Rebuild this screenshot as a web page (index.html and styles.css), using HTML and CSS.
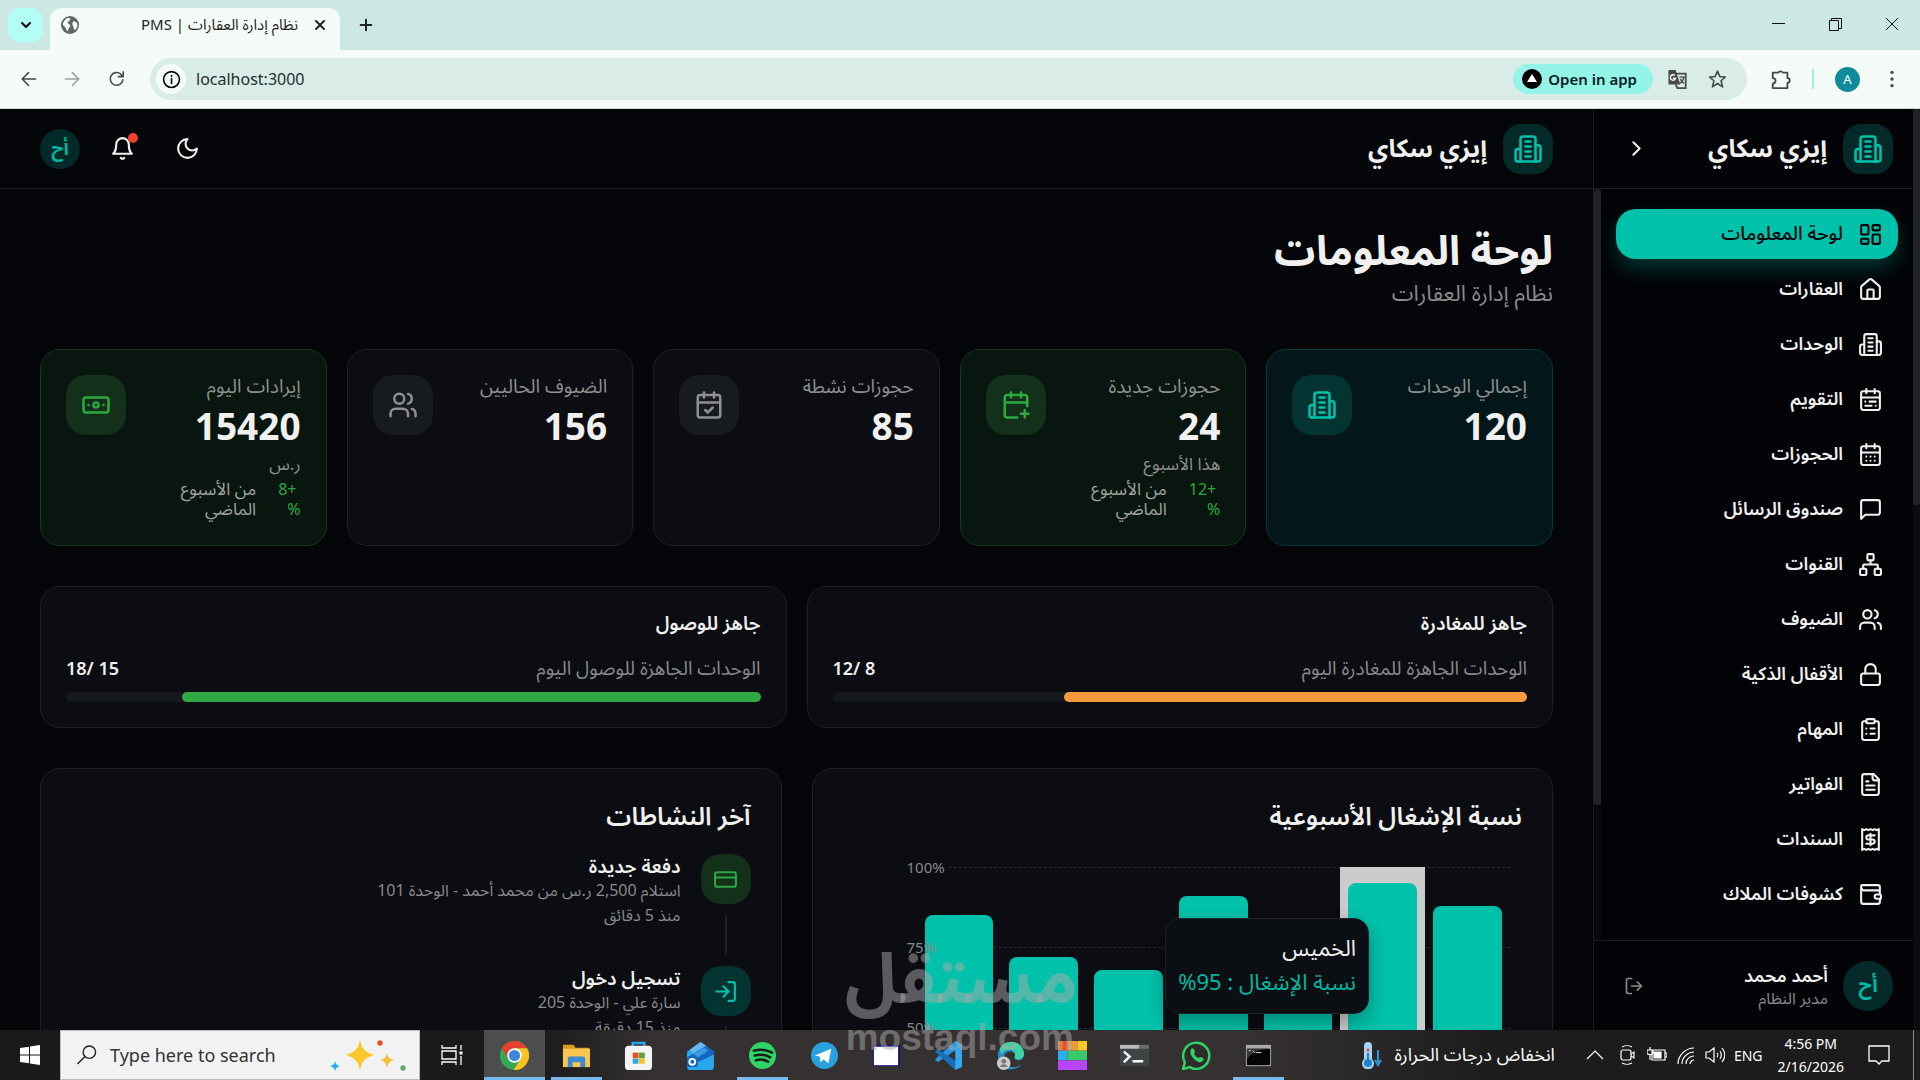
FILE: index.html
```html
<!DOCTYPE html>
<html lang="ar">
<head>
    <meta charset="UTF-8">
    <title>نظام إدارة العقارات | PMS</title>
    <link rel="stylesheet" href="styles.css">
</head>
<body>
<svg class="sprite" aria-hidden="true">
    <symbol id="building" viewBox="0 0 24 24"><path d="M6 22V4a2 2 0 0 1 2-2h8a2 2 0 0 1 2 2v18Z"/><path d="M6 12H4a2 2 0 0 0-2 2v6a2 2 0 0 0 2 2h2"/><path d="M18 9h2a2 2 0 0 1 2 2v9a2 2 0 0 1-2 2h-2"/><path d="M10 6h4M10 10h4M10 14h4M10 18h4"/></symbol>
    <symbol id="dashboard" viewBox="0 0 24 24"><rect x="3" y="3" width="7" height="9" rx="1"/><rect x="14" y="3" width="7" height="5" rx="1"/><rect x="14" y="12" width="7" height="9" rx="1"/><rect x="3" y="16" width="7" height="5" rx="1"/></symbol>
    <symbol id="home" viewBox="0 0 24 24"><path d="M15 21v-8a1 1 0 0 0-1-1h-4a1 1 0 0 0-1 1v8"/><path d="M3 10a2 2 0 0 1 .7-1.5l7-6a2 2 0 0 1 2.600 0l7 6A2 2 0 0 1 21 10v9a2 2 0 0 1-2 2H5a2 2 0 0 1-2-2z"/></symbol>
    <symbol id="calendar-range" viewBox="0 0 24 24"><rect x="3" y="4" width="18" height="18" rx="2"/><path d="M16 2v4M3 10h18M8 2v4M17 14h-6M13 18H7M7 14h.01M17 18h.01"/></symbol>
    <symbol id="calendar-days" viewBox="0 0 24 24"><rect x="3" y="4" width="18" height="18" rx="2"/><path d="M8 2v4M16 2v4M3 10h18M8 14h.01M12 14h.01M16 14h.01M8 18h.01M12 18h.01M16 18h.01"/></symbol>
    <symbol id="message" viewBox="0 0 24 24"><path d="M21 15a2 2 0 0 1-2 2H7l-4 4V5a2 2 0 0 1 2-2h14a2 2 0 0 1 2 2z"/></symbol>
    <symbol id="network" viewBox="0 0 24 24"><rect x="16" y="16" width="6" height="6" rx="1"/><rect x="2" y="16" width="6" height="6" rx="1"/><rect x="9" y="2" width="6" height="6" rx="1"/><path d="M5 16v-3a1 1 0 0 1 1-1h12a1 1 0 0 1 1 1v3M12 12V8"/></symbol>
    <symbol id="users" viewBox="0 0 24 24"><path d="M16 21v-2a4 4 0 0 0-4-4H6a4 4 0 0 0-4 4v2"/><circle cx="9" cy="7" r="4"/><path d="M22 21v-2a4 4 0 0 0-3-3.870M16 3.130a4 4 0 0 1 0 7.750"/></symbol>
    <symbol id="lock" viewBox="0 0 24 24"><rect x="3" y="11" width="18" height="11" rx="2"/><path d="M7 11V7a5 5 0 0 1 10 0v4"/></symbol>
    <symbol id="clipboard" viewBox="0 0 24 24"><rect x="8" y="2" width="8" height="4" rx="1"/><path d="M16 4h2a2 2 0 0 1 2 2v14a2 2 0 0 1-2 2H6a2 2 0 0 1-2-2V6a2 2 0 0 1 2-2h2M12 11h4M12 16h4M8 11h.01M8 16h.01"/></symbol>
    <symbol id="file" viewBox="0 0 24 24"><path d="M15 2H6a2 2 0 0 0-2 2v16a2 2 0 0 0 2 2h12a2 2 0 0 0 2-2V7Z"/><path d="M14 2v4a2 2 0 0 0 2 2h4M10 9H8M16 13H8M16 17H8"/></symbol>
    <symbol id="receipt" viewBox="0 0 24 24"><path d="M4 2v20l2-1 2 1 2-1 2 1 2-1 2 1 2-1 2 1V2l-2 1-2-1-2 1-2-1-2 1-2-1-2 1Z"/><path d="M16 8h-6a2 2 0 1 0 0 4h4a2 2 0 1 1 0 4H8M12 17.500v-11"/></symbol>
    <symbol id="wallet" viewBox="0 0 24 24"><path d="M21 8V5a2 2 0 0 0-2-2H4a1 1 0 0 0-1 1M3 4v15a2 2 0 0 0 2 2h14a2 2 0 0 0 2-2v-3M3 4a4 4 0 0 0 2 4h14a2 2 0 0 1 2 2v2M21 12h-3a2 2 0 0 0 0 4h4v-3a1 1 0 0 0-1-1"/></symbol>
    <symbol id="calendar-plus" viewBox="0 0 24 24"><path d="M8 2v4M16 2v4M21 13V6a2 2 0 0 0-2-2H5a2 2 0 0 0-2 2v14a2 2 0 0 0 2 2h8M3 10h18M16 19h6M19 16v6"/></symbol>
    <symbol id="calendar-check" viewBox="0 0 24 24"><rect x="3" y="4" width="18" height="18" rx="2"/><path d="M8 2v4M16 2v4M3 10h18M9 16l2 2 4-4"/></symbol>
    <symbol id="banknote" viewBox="0 0 24 24"><rect x="2" y="6" width="20" height="12" rx="2"/><circle cx="12" cy="12" r="2"/><path d="M6 12h.01M18 12h.01"/></symbol>
    <symbol id="card" viewBox="0 0 24 24"><rect x="2" y="5" width="20" height="14" rx="2"/><path d="M2 10h20"/></symbol>
    <symbol id="login" viewBox="0 0 24 24"><path d="M15 3h4a2 2 0 0 1 2 2v14a2 2 0 0 1-2 2h-4M10 17l5-5-5-5M15 12H3"/></symbol>
    <symbol id="logout" viewBox="0 0 24 24"><path d="M9 21H5a2 2 0 0 1-2-2V5a2 2 0 0 1 2-2h4M16 17l5-5-5-5M21 12H9"/></symbol>
</svg>

<div class="tabstrip">
    <button class="tab-search" aria-label="Search tabs"><svg class="icon" viewBox="0 0 24 24"><path d="m6 9 6 6 6-6"/></svg></button>
    <div class="tab">
        <svg class="globe" viewBox="0 0 20 20"><circle cx="10" cy="10" r="9" fill="#5f6664"/><path d="M8 3c3 0 3 2 1 3S7 8 9 9s1 3 0 4-1 4-2 3-1-4-3-5-1-4 1-6 2-2 3-2Zm6 3 3 2c1 3 0 5-2 7-2-1-1-3-2-4s-1-4 1-5Z" fill="#f5fbf9"/></svg>
        <span class="tab-title" dir="rtl">نظام إدارة العقارات | PMS</span>
        <button class="plain" aria-label="Close tab"><svg class="icon" viewBox="0 0 24 24"><path d="m6 6 12 12M18 6 6 18"/></svg></button>
    </div>
    <button class="plain new-tab" aria-label="New tab"><svg class="icon" viewBox="0 0 24 24"><path d="M12 4v16M4 12h16"/></svg></button>
    <div class="window-controls">
        <button class="plain" aria-label="Minimize"><svg viewBox="0 0 14 14"><path d="M1 6.500h13"/></svg></button>
        <button class="plain" aria-label="Restore"><svg viewBox="0 0 14 14"><path d="M1.500 3.500h9v10h-9zM3.500 3.500v-2h10v10h-3"/></svg></button>
        <button class="plain" aria-label="Close"><svg viewBox="0 0 14 14"><path d="m1 1 12 12M13 1 1 13"/></svg></button>
    </div>
</div>

<div class="toolbar">
    <button class="plain" aria-label="Back"><svg class="icon" viewBox="0 0 24 24"><path d="M21 12H4M12 4l-8 8 8 8"/></svg></button>
    <button class="plain faded" aria-label="Forward"><svg class="icon" viewBox="0 0 24 24"><path d="M3 12h17M12 4l8 8-8 8"/></svg></button>
    <button class="plain" aria-label="Reload"><svg class="icon" viewBox="0 0 24 24"><path d="M20 13a8 8 0 1 1-2.500-7L20 9M20.500 3v6h-6"/></svg></button>
    <div class="omnibox">
        <button class="site-info" aria-label="Site information"><svg class="icon" viewBox="0 0 24 24"><circle cx="12" cy="12" r="10"/><path d="M12 11v6M12 7v1"/></svg></button>
        <input class="url" type="text" aria-label="Address" value="localhost:3000">
        <button class="open-app"><svg viewBox="0 0 20 20"><circle cx="10" cy="10" r="10"/><path d="m10 5 5 8H5z" fill="#fff"/></svg>Open in app</button>
        <button class="plain" aria-label="Translate"><svg class="translate" viewBox="0 0 22 22"><path d="M9 5h11v16h-9l-2-4" fill="none" stroke="#454b49" stroke-width="2"/><path d="M1 1h8l5 16H1z" fill="#454b49"/><path d="M8 7a3 3 0 1 0 1 3H6" fill="none" stroke="#fff" stroke-width="1.500"/><path d="M13 9h6M16 8v1M18 9c-1 4-3 6-5 7M14 11l4 5" fill="none" stroke="#454b49" stroke-width="1.500"/></svg></button>
        <button class="plain" aria-label="Bookmark"><svg class="icon" viewBox="0 0 24 24"><path d="m12 2 3 7 7 .5-5.500 4.700L18.500 22 12 17.700 5.500 22l2-7.800L2 9.500 9 9z"/></svg></button>
    </div>
    <button class="plain extensions" aria-label="Extensions"><svg class="icon" viewBox="0 0 24 24"><path d="M3 5h6a3 3 0 0 1 5 0h5v6a2 2 0 0 1 0 5v6H3v-5a3 3 0 0 0 0-6z"/></svg></button>
    <span class="divider"></span>
    <button class="profile" aria-label="Profile">A</button>
    <button class="plain" aria-label="Menu"><svg viewBox="0 0 24 24" fill="#454b49"><circle cx="12" cy="4" r="2"/><circle cx="12" cy="12" r="2"/><circle cx="12" cy="20" r="2"/></svg></button>
</div>

<div class="app" dir="rtl">
    <div class="page-scroll"><span></span></div>
    <aside class="sidebar">
        <div class="brand-bar">
            <span class="brand-icon"><svg class="icon"><use href="#building"/></svg></span>
            <span class="brand-name">إيزي سكاي</span>
            <button class="plain collapse" aria-label="طي القائمة"><svg class="icon" viewBox="0 0 24 24"><path d="m9 18 6-6-6-6"/></svg></button>
        </div>
        <div class="sidebar-body">
            <nav class="menu">
                <a class="menu-item active" href="#"><svg class="icon"><use href="#dashboard"/></svg>لوحة المعلومات</a>
                <a class="menu-item" href="#"><svg class="icon"><use href="#home"/></svg>العقارات</a>
                <a class="menu-item" href="#"><svg class="icon"><use href="#building"/></svg>الوحدات</a>
                <a class="menu-item" href="#"><svg class="icon"><use href="#calendar-range"/></svg>التقويم</a>
                <a class="menu-item" href="#"><svg class="icon"><use href="#calendar-days"/></svg>الحجوزات</a>
                <a class="menu-item" href="#"><svg class="icon"><use href="#message"/></svg>صندوق الرسائل</a>
                <a class="menu-item" href="#"><svg class="icon"><use href="#network"/></svg>القنوات</a>
                <a class="menu-item" href="#"><svg class="icon"><use href="#users"/></svg>الضيوف</a>
                <a class="menu-item" href="#"><svg class="icon"><use href="#lock"/></svg>الأقفال الذكية</a>
                <a class="menu-item" href="#"><svg class="icon"><use href="#clipboard"/></svg>المهام</a>
                <a class="menu-item" href="#"><svg class="icon"><use href="#file"/></svg>الفواتير</a>
                <a class="menu-item" href="#"><svg class="icon"><use href="#receipt"/></svg>السندات</a>
                <a class="menu-item" href="#"><svg class="icon"><use href="#wallet"/></svg>كشوفات الملاك</a>
            </nav>
            <div class="menu-scroll"><span></span></div>
        </div>
        <div class="user">
            <span class="avatar">أح</span>
            <div class="user-text">
                <div class="user-name">أحمد محمد</div>
                <div class="user-role">مدير النظام</div>
            </div>
            <button class="plain logout" aria-label="تسجيل الخروج"><svg class="icon"><use href="#logout"/></svg></button>
        </div>
    </aside>

    <main class="main">
        <header class="header">
            <span class="brand-icon"><svg class="icon"><use href="#building"/></svg></span>
            <span class="brand-name">إيزي سكاي</span>
            <div class="header-actions">
                <button class="plain" aria-label="الوضع الليلي"><svg class="icon" viewBox="0 0 24 24"><path d="M12 3a6 6 0 0 0 9 9 9 9 0 1 1-9-9Z"/></svg></button>
                <button class="plain bell" aria-label="الإشعارات"><svg class="icon" viewBox="0 0 24 24"><path d="M6 8a6 6 0 0 1 12 0c0 7 3 9 3 9H3s3-2 3-9M10.300 21a2 2 0 0 0 3.400 0"/></svg><i class="dot"></i></button>
                <span class="avatar small">أح</span>
            </div>
        </header>

        <div class="content">
            <div class="heading">
                <h1>لوحة المعلومات</h1>
                <p>نظام إدارة العقارات</p>
            </div>

            <section class="stats">
                <div class="card stat teal">
                    <div class="stat-text">
                        <div class="stat-label">إجمالي الوحدات</div>
                        <div class="stat-value">120</div>
                    </div>
                    <span class="stat-icon"><svg class="icon"><use href="#building"/></svg></span>
                </div>
                <div class="card stat green">
                    <div class="stat-text">
                        <div class="stat-label">حجوزات جديدة</div>
                        <div class="stat-value">24</div>
                        <div class="stat-note">هذا الأسبوع</div>
                        <div class="trend"><span class="up">&nbsp;+12<br>%</span><span>من الأسبوع<br>الماضي</span></div>
                    </div>
                    <span class="stat-icon"><svg class="icon"><use href="#calendar-plus"/></svg></span>
                </div>
                <div class="card stat">
                    <div class="stat-text">
                        <div class="stat-label">حجوزات نشطة</div>
                        <div class="stat-value">85</div>
                    </div>
                    <span class="stat-icon"><svg class="icon"><use href="#calendar-check"/></svg></span>
                </div>
                <div class="card stat">
                    <div class="stat-text">
                        <div class="stat-label">الضيوف الحاليين</div>
                        <div class="stat-value">156</div>
                    </div>
                    <span class="stat-icon"><svg class="icon"><use href="#users"/></svg></span>
                </div>
                <div class="card stat green">
                    <div class="stat-text">
                        <div class="stat-label">إيرادات اليوم</div>
                        <div class="stat-value">15420</div>
                        <div class="stat-note">ر.س</div>
                        <div class="trend"><span class="up">&nbsp;+8<br>%</span><span>من الأسبوع<br>الماضي</span></div>
                    </div>
                    <span class="stat-icon"><svg class="icon"><use href="#banknote"/></svg></span>
                </div>
            </section>

            <section class="ready">
                <div class="card ready-card">
                    <h3>جاهز للمغادرة</h3>
                    <div class="ready-row"><span>الوحدات الجاهزة للمغادرة اليوم</span><b>8 /12</b></div>
                    <div class="progress"><div class="fill orange" style="width: 66.670%"></div></div>
                </div>
                <div class="card ready-card">
                    <h3>جاهز للوصول</h3>
                    <div class="ready-row"><span>الوحدات الجاهزة للوصول اليوم</span><b>15 /18</b></div>
                    <div class="progress"><div class="fill" style="width: 83.330%"></div></div>
                </div>
            </section>

            <section class="panels">
                <div class="card panel">
                    <h2>نسبة الإشغال الأسبوعية</h2>
                    <div class="chart" dir="ltr">
                        <div class="grid-lines"><i></i><i></i><i></i><i></i></div>
                        <div class="bars">
                            <div class="slot"><div class="bar" style="height: 85%"></div></div>
                            <div class="slot"><div class="bar" style="height: 72%"></div></div>
                            <div class="slot"><div class="bar" style="height: 68%"></div></div>
                            <div class="slot"><div class="bar" style="height: 91%"></div></div>
                            <div class="slot"><div class="bar" style="height: 78%"></div></div>
                            <div class="slot hover"><div class="bar" style="height: 95%"></div></div>
                            <div class="slot"><div class="bar" style="height: 88%"></div></div>
                        </div>
                        <div class="ticks"><span>100%</span><span>75%</span><span>50%</span></div>
                        <div class="tooltip" dir="rtl">
                            <div>الخميس</div>
                            <div class="tooltip-value">نسبة الإشغال : 95%</div>
                        </div>
                    </div>
                </div>
                <div class="card panel">
                    <h2>آخر النشاطات</h2>
                    <div class="activity">
                        <div class="rail"><span class="activity-icon green"><svg class="icon"><use href="#card"/></svg></span></div>
                        <div class="activity-text">
                            <h4>دفعة جديدة</h4>
                            <p>استلام 2,500 ر.س من محمد أحمد - الوحدة 101</p>
                            <p>منذ 5 دقائق</p>
                        </div>
                    </div>
                    <div class="activity">
                        <div class="rail"><span class="activity-icon teal"><svg class="icon"><use href="#login"/></svg></span></div>
                        <div class="activity-text">
                            <h4>تسجيل دخول</h4>
                            <p>سارة علي - الوحدة 205</p>
                            <p>منذ 15 دقيقة</p>
                        </div>
                    </div>
                </div>
            </section>
        </div>
    </main>
</div>

<footer class="taskbar">
    <button class="plain start" aria-label="Start"><svg viewBox="0 0 20 20" fill="#fff"><path d="m0 3 9-1.300V9.500H0zM10 1.500 20 0v9.500H10zM0 10.500h9v7.800L0 17zM10 10.500h10V20l-10-1.500z"/></svg></button>
    <div class="search">
        <svg viewBox="0 0 22 22" fill="none" stroke="#222" stroke-width="1.500"><circle cx="14" cy="8" r="6.500"/><path d="m9.500 12.500-8 8"/></svg>
        <input type="text" aria-label="Search" placeholder="Type here to search">
        <svg class="sparkles" viewBox="0 0 78 32"><path d="M31 1c2 9 5 12 14 15-9 3-12 6-14 15-2-9-5-12-14-15 9-3 12-6 14-15Z" fill="#fcc72a"/><path d="M58 14c1 5 3 6 7 7-4 1-6 3-7 8-1-5-3-7-7-8 4-1 6-2 7-7Z" fill="#f5be36"/><path d="M6 22c1 4 2 4 5 5-3 1-4 2-5 5-1-3-2-4-5-5 3-1 4-1 5-5Z" fill="#2aaef0"/><circle cx="51" cy="4" r="2.700" fill="#e8502c"/><circle cx="74" cy="29" r="2.700" fill="#65a863"/></svg>
    </div>
    <button class="plain task-view" aria-label="Task view"><svg viewBox="0 0 22 20" fill="none" stroke="#fff" stroke-width="1.300"><path d="M1 0v3h14V0M1 20v-3h14v3M1 6h14v8H1zM20 0v5M20 11v9"/><path d="M18.500 6.500h3v3h-3z" fill="#fff" stroke="none"/></svg></button>
    <div class="tasks">
        <button class="task current open" aria-label="Chrome"><svg viewBox="0 0 30 30"><circle cx="15" cy="15" r="15" fill="#34a853"/><path d="M2 7.500A15 15 0 0 1 28 7.500H15l-6.500 11z" fill="#e8402f"/><path d="M28 7.500A15 15 0 0 1 14 30l7.500-11.500L15 7.500z" fill="#fbc31e"/><circle cx="15" cy="15" r="7.500" fill="#fff"/><circle cx="15" cy="15" r="5.800" fill="#3b87d8"/></svg></button>
        <button class="task open" aria-label="File Explorer"><svg viewBox="0 0 30 30"><path d="M1 4h11l2 3h14v20H1z" fill="#d99b22"/><path d="M1 8h28v19H1z" fill="#f9c74f"/><path d="M6 27V18a2 2 0 0 1 2-2h14a2 2 0 0 1 2 2v9h-5v-5h-8v5z" fill="#3b8ad3"/></svg></button>
        <button class="task" aria-label="Store"><svg viewBox="0 0 30 30"><path d="M9 6V2h12v4" fill="none" stroke="#29a9e8" stroke-width="2.500"/><rect y="5" x="1" width="28" height="25" rx="4" fill="#f3f4f3"/><path d="M9 12h6v6H9z" fill="#e8502c"/><path d="M15.500 12h6v6h-6z" fill="#5ca82f"/><path d="M9 18.500h6v5H9z" fill="#29a9e8"/><path d="M15.500 18.500h6v5h-6z" fill="#fbc31e"/></svg></button>
        <button class="task" aria-label="Outlook"><svg viewBox="0 0 30 30"><path d="M1 11 15 1l14 10v15a4 4 0 0 1-4 4H5a4 4 0 0 1-4-4z" fill="#28a8ea"/><path d="m4 9 11-8 6 4L8 14z" fill="#64b8f0"/><path d="m1 17 20-12 8 6v3L12 22z" fill="#1465c0"/><path d="m8 13 11-6 4 3-11 7z" fill="#3d9be0"/><rect x="1" y="16" width="11" height="11" rx="2" fill="#1065b8"/><circle cx="6.500" cy="21.500" r="3" fill="none" stroke="#fff" stroke-width="2"/></svg></button>
        <button class="task open" aria-label="Spotify"><svg viewBox="0 0 30 30"><circle cx="15" cy="15" r="14" fill="#2fd566"/><path d="M6 10c7-2 13-1 19 2M7 15c6-1.500 11-1 16 2M8 20c5-1.500 9-1 13 1.500" fill="none" stroke="#172019" stroke-width="2.600" stroke-linecap="round"/></svg></button>
        <button class="task" aria-label="Telegram"><svg viewBox="0 0 30 30"><circle cx="15" cy="15" r="14" fill="#2aa1df"/><path d="m5 15 17-7-3 15-5-4-3 3-1-6z" fill="#fff"/></svg></button>
        <button class="task" aria-label="Window"><svg viewBox="0 0 30 30"><path d="M1 4h28v22H1z" fill="#14147c"/><path d="M2 6h25v19H2z" fill="#fff"/></svg></button>
        <button class="task" aria-label="VS Code"><svg viewBox="0 0 30 30"><path d="M22 0 1 19l3 3L29 5z" fill="#2b93dc"/><path d="M22 30 1 11l3-3 25 17z" fill="#1671b8"/><path d="m22 0 7 3v24l-7 3z" fill="#37a8ee"/></svg></button>
        <button class="task" aria-label="Edge"><svg viewBox="0 0 30 30"><path d="M2 15a13 13 0 0 1 27-1c0 7-8 7-10 4 3-5-3-9-8-6-4 2-3 8 0 12 5 5 12 3 15 0-4 8-24 9-24-9Z" fill="#2789c9"/><path d="M7 4c10-8 22 0 22 9 0 7-8 7-10 4 2-4 0-8-5-8-6 0-7 3-8 5-3-4-2-8 1-10Z" fill="#3ed2a0"/><circle cx="8" cy="23" r="7" fill="#ccc"/><circle cx="8" cy="21" r="2.500" fill="#777"/><path d="M4 27c1-4 7-4 8 0z" fill="#777"/></svg></button>
        <button class="task" aria-label="Palette"><svg viewBox="0 0 30 30"><path d="M0 0h10v10H0z" fill="#f07b2c"/><path d="M10 0h10v10H10z" fill="#ee9a38"/><path d="M5 0h5v10H5z" fill="#e8502c"/><path d="M20 0h10v10H20z" fill="#fcc72a"/><path d="M0 10h10v10H0z" fill="#2aaef0"/><path d="M10 10h20v10H10z" fill="#37c96c"/><path d="M0 20h30v10H0z" fill="#b845f7"/></svg></button>
        <button class="task" aria-label="Terminal"><svg viewBox="0 0 30 30"><path d="M0 4h30v22H0z" fill="#3f4447"/><path d="M0 4h20v4H0z" fill="#bbb"/><path d="M20 4h10v4H20z" fill="#686d70"/><path d="m4 11 6 5-6 6M13 21h11" fill="none" stroke="#fff" stroke-width="2.500"/></svg></button>
        <button class="task" aria-label="WhatsApp"><svg viewBox="0 0 30 30"><path d="m1 29 2-7A13.500 13.500 0 1 1 8 27z" fill="#302c2b" stroke="#2fd566" stroke-width="2.500"/><path d="M9 9c1-2 3-2 4 1s-1 2 0 4 3 4 5 3c1-1 6 1 4 3-3 4-7 1-10-2S8 12 9 9Z" fill="#2fd566"/></svg></button>
        <button class="task open" aria-label="Command Prompt"><svg viewBox="0 0 30 30"><path d="M2 4h26v22H2z" fill="#aaa"/><path d="M3 8h24v17H3z" fill="#050507"/><path d="M3 8h24c-12 1-19 3-24 11z" fill="#34393c"/><path d="M5 10h2M9 10l2 2M12 12h6" stroke="#ddd"/></svg></button>
    </div>
    <button class="plain weather"><svg viewBox="0 0 22 28"><path d="M4 5a4 4 0 0 1 8 0v13a6 6 0 1 1-8 0z" fill="#a4d2f0"/><circle cx="8" cy="22" r="4" fill="#1f82d0"/><path d="M7 12h2v10H7z" fill="#1f82d0"/><circle cx="8" cy="9" r="1.500" fill="#e8402f"/><path d="M18 9v14m-3-4 3 5 3-5" fill="none" stroke="#2e93dd" stroke-width="2"/></svg><span dir="rtl">انخفاض درجات الحرارة</span></button>
    <div class="tray">
        <svg viewBox="0 0 20 20"><path d="m2 14 8-8 8 8"/></svg>
        <svg viewBox="0 0 20 20"><rect x="3" y="5" width="10" height="10" rx="2"/><path d="m13 9 3-2v6l-3-2M4 2c4-2 6-2 10 0M4 18c4 2 6 2 10 0"/></svg>
        <svg viewBox="0 0 20 20"><path d="M5 5h13v10H5zM18 8h2v4h-2M3 2v3M0 5h6v3c0 2-6 2-6 0zM3 9v6"/><path d="M7 7h7v6H7z" fill="#fff"/></svg>
        <svg viewBox="0 0 20 20"><path d="M2 19C2 10 10 3 18 3M6 19c0-7 6-12 12-12M10 19c0-5 4-8 8-8M14 19c0-2 2-4 4-4"/></svg>
        <svg viewBox="0 0 20 20"><path d="M1 7h3l5-4v14l-5-4H1zM12 8c1 1 1 3 0 4M15 6c2 3 2 5 0 8M17 3c4 5 4 9 0 14"/></svg>
        <span>ENG</span>
    </div>
    <div class="clock">4:56 PM<br>2/16/2026</div>
    <button class="plain notice" aria-label="Notifications"><svg viewBox="0 0 22 22" fill="none" stroke="#fff" stroke-width="1.300"><path d="M1 2h20v15h-7l-3 3-3-3H1z"/></svg></button>
</footer>

<div class="watermark" aria-hidden="true"><span>مستقل</span><span class="domain">mostaql.com</span></div>
</body>
</html>
```
FILE: styles.css
```css
* {
    box-sizing: border-box;
}

body {
    margin: 0;
    height: 100vh;
    display: flex;
    flex-direction: column;
    overflow: hidden;
    position: relative;
    background: #04060a;
    font-family: "Noto Sans", "Noto Sans Arabic", "Noto Kufi Arabic", sans-serif;
}

h1, h2, h3, h4, p {
    margin: 0;
}

button, input {
    font-family: inherit;
}

svg {
    display: block;
    flex: none;
}

.sprite {
    position: absolute;
    width: 0;
    height: 0;
}

.icon {
    width: 25px;
    height: 25px;
    fill: none;
    stroke: currentColor;
    stroke-width: 2;
    stroke-linecap: round;
    stroke-linejoin: round;
}

.plain {
    display: flex;
    align-items: center;
    justify-content: center;
    padding: 0;
    border: 0;
    background: none;
    color: inherit;
}

/* browser */
.tabstrip {
    flex: none;
    height: 50px;
    display: flex;
    align-items: flex-start;
    padding: 8px 0 0 8px;
    background: #cde8e4;
    color: #1d2422;
}

.tabstrip .icon {
    width: 16px;
    height: 16px;
    stroke-width: 3;
}

.tab-search {
    width: 35px;
    height: 34px;
    display: flex;
    align-items: center;
    justify-content: center;
    padding: 0;
    border: 0;
    border-radius: 12px;
    background: #b2fdf5;
}

.tab {
    width: 290px;
    height: 42px;
    margin-left: 7px;
    padding: 0 12px 8px 10px;
    display: flex;
    align-items: center;
    border-radius: 12px 12px 0 0;
    background: #f5fbf9;
}

.globe {
    width: 20px;
    height: 20px;
}

.tab-title {
    flex: 1;
    padding-right: 14px;
    font-size: 15px;
}

.new-tab {
    height: 34px;
    margin-left: 18px;
}

.window-controls {
    margin-left: auto;
    display: flex;
}

.window-controls button {
    width: 57px;
    height: 32px;
}

.window-controls svg {
    width: 14px;
    height: 14px;
    fill: none;
    stroke: #111;
}

.toolbar {
    flex: none;
    height: 59px;
    display: flex;
    align-items: center;
    padding: 0 6px;
    border-bottom: 1px solid #c5d6d3;
    background: #f5fbf9;
    color: #454b49;
}

.toolbar .plain {
    width: 44px;
    height: 42px;
}

.toolbar .icon {
    width: 19px;
    height: 19px;
}

.toolbar .faded {
    opacity: .5;
}

.toolbar .plain > svg {
    height: 20px;
}

.omnibox {
    flex: 1;
    height: 42px;
    margin-left: 12px;
    padding: 0 10px 0 6px;
    display: flex;
    align-items: center;
    border-radius: 21px;
    background: #daece8;
}

.omnibox .plain {
    width: 40px;
}

.site-info {
    width: 30px;
    height: 30px;
    display: flex;
    align-items: center;
    justify-content: center;
    padding: 0;
    border: 0;
    border-radius: 15px;
    background: #f5fbf9;
}

.url {
    flex: 1;
    margin-left: 8px;
    padding: 0 2px;
    border: 0;
    background: none;
    color: #20302d;
    font-size: 16px;
}

.open-app {
    height: 30px;
    margin-right: 4px;
    padding: 0 16px 0 9px;
    display: flex;
    align-items: center;
    gap: 6px;
    border: 0;
    border-radius: 15px;
    background: #94f4e8;
    color: #06211e;
    font-size: 15px;
    font-weight: 600;
}

.open-app svg {
    width: 20px;
    height: 20px;
}

.translate {
    width: 21px;
}

.extensions {
    margin-left: 12px;
}

.toolbar .extensions .icon {
    width: 22px;
    height: 22px;
}

.divider {
    width: 2px;
    height: 20px;
    margin: 0 21px 0 9px;
    background: #94f4e8;
}

.profile {
    width: 25px;
    height: 25px;
    margin-right: 10px;
    padding: 0;
    border: 0;
    border-radius: 50%;
    background: #0e8c9c;
    color: #fff;
    font-size: 13px;
}

/* application */
.app {
    flex: 1;
    min-height: 0;
    display: flex;
    overflow: hidden;
    color: #f0f0ee;
}

.page-scroll {
    width: 7px;
    background: #0a0c10;
}

.page-scroll span, .menu-scroll span {
    display: block;
    width: 7px;
    height: 43%;
    border-radius: 4px;
    background: #202328;
}

.sidebar {
    flex: none;
    width: 320px;
    display: flex;
    flex-direction: column;
    border-left: 1px solid #1a1c20;
    background: #020307;
}

.brand-bar, .header {
    flex: none;
    height: 80px;
    display: flex;
    align-items: center;
    gap: 16px;
    padding: 0 20px;
    border-bottom: 1px solid #1a1c20;
}

.brand-icon {
    width: 50px;
    height: 50px;
    display: flex;
    align-items: center;
    justify-content: center;
    border-radius: 18px;
    background: #032a28;
    color: #00c2aa;
}

.brand-icon .icon {
    width: 30px;
    height: 30px;
}

.brand-name {
    font-size: 25px;
    font-weight: 700;
}

.collapse {
    margin-right: auto;
    width: 44px;
}

.sidebar-body {
    flex: 1;
    min-height: 0;
    display: flex;
}

.menu {
    flex: 1;
    display: flex;
    flex-direction: column;
    gap: 5px;
    padding: 20px 15px;
}

.menu-item {
    flex: none;
    height: 50px;
    display: flex;
    align-items: center;
    gap: 15px;
    padding: 0 15px;
    border-radius: 20px;
    color: #f0f0ee;
    font-size: 18px;
    font-weight: 600;
    text-decoration: none;
}

.menu-item.active {
    background: #00c2aa;
    box-shadow: 0 10px 20px rgba(0, 194, 170, .25);
    color: #020307;
    font-size: 19px;
    font-weight: 500;
}

.menu-scroll {
    width: 7px;
    background: #07090c;
}

.menu-scroll span {
    height: 82%;
}

.user {
    flex: none;
    height: 90px;
    display: flex;
    align-items: center;
    gap: 15px;
    padding: 0 20px;
    border-top: 1px solid #1a1c20;
}

.avatar {
    width: 50px;
    height: 50px;
    display: flex;
    align-items: center;
    justify-content: center;
    border-radius: 50%;
    background: #032a28;
    color: #00b8a2;
    font-size: 20px;
    font-weight: 700;
}

.avatar.small {
    width: 40px;
    height: 40px;
    font-size: 18px;
}

.user-text {
    flex: 1;
}

.user-name {
    font-size: 18px;
    font-weight: 600;
    line-height: 24px;
}

.user-role {
    color: #8a8a8a;
    font-size: 16px;
    line-height: 22px;
}

.logout {
    width: 40px;
    color: #8a8a8a;
}

.logout .icon {
    width: 20px;
    height: 20px;
}

.main {
    flex: 1;
    min-width: 0;
    display: flex;
    flex-direction: column;
}

.header {
    padding: 0 40px;
}

.header-actions {
    margin-right: auto;
    display: flex;
    align-items: center;
    gap: 20px;
}

.header-actions .plain {
    width: 45px;
    height: 45px;
}

.bell {
    position: relative;
}

.dot {
    position: absolute;
    top: 7px;
    right: 7px;
    width: 10px;
    height: 10px;
    border-radius: 50%;
    background: #ef402c;
}

.content {
    flex: none;
    display: flex;
    flex-direction: column;
    gap: 40px;
    padding: 40px;
}

.heading {
    height: 80px;
}

.heading h1 {
    font-size: 41px;
    line-height: 40px;
}

.heading p {
    color: #8a8a8a;
    font-size: 22px;
    line-height: 30px;
    padding-top: 8px;
}

.card {
    border: 1px solid #1d2025;
    border-radius: 20px;
    background: #0b0d12;
}

.stats {
    display: grid;
    grid-template-columns: repeat(5, 1fr);
    gap: 20px;
}

.stat {
    min-height: 197px;
    display: flex;
    justify-content: space-between;
    padding: 25px;
}

.stat.teal {
    border-color: #043b3a;
    background: #03171b;
}

.stat.green {
    border-color: #14381b;
    background: #09160f;
}

.stat-label {
    color: #8f9090;
    font-size: 19px;
    line-height: 23px;
}

.stat-value {
    font-size: 37px;
    font-weight: 700;
    line-height: 56px;
}

.stat-note {
    color: #8f9090;
    font-size: 17px;
    line-height: 20px;
}

.trend {
    display: flex;
    gap: 22px;
    padding-top: 5px;
    color: #a0a2a1;
    font-size: 17px;
    line-height: 20px;
}

.up {
    color: #2ea840;
    font-size: 16px;
}

.stat-icon {
    width: 60px;
    height: 60px;
    display: flex;
    align-items: center;
    justify-content: center;
    border-radius: 20px;
    background: #171a1f;
    color: #8f9090;
}

.stat-icon .icon {
    width: 30px;
    height: 30px;
}

.teal .stat-icon, .activity-icon.teal {
    background: #033431;
    color: #00c2aa;
}

.green .stat-icon, .activity-icon.green {
    background: #12301a;
    color: #2ea840;
}

.ready {
    display: grid;
    grid-template-columns: 1fr 1fr;
    gap: 20px;
}

.ready-card {
    height: 142px;
    padding: 25px;
}

.ready-card h3 {
    font-size: 19px;
    font-weight: 600;
    line-height: 23px;
}

.ready-row {
    display: flex;
    justify-content: space-between;
    padding: 20px 0 10px;
    color: #8a8a8a;
    font-size: 19px;
    line-height: 27px;
}

.ready-row b {
    color: #f0f0ee;
    font-size: 18px;
    font-weight: 600;
}

.progress {
    height: 10px;
    border-radius: 5px;
    background: #15181c;
}

.fill {
    height: 10px;
    border-radius: 5px;
    background: #2fa944;
}

.fill.orange {
    background: #f79a3c;
}

.panels {
    display: grid;
    grid-template-columns: 1fr 1fr;
    gap: 30px;
}

.panel {
    padding: 30px;
}

.panel h2 {
    font-size: 25px;
    font-weight: 600;
    line-height: 32px;
}

.chart {
    position: relative;
    height: 321px;
    margin: 36px 12px 0 74px;
}

.grid-lines {
    position: absolute;
    inset: 0 0 0 32px;
    display: flex;
    flex-direction: column;
}

.grid-lines i {
    flex: 1;
    border-top: 1px dashed #26292d;
}

.bars {
    position: relative;
    height: 100%;
    display: flex;
}

.slot {
    flex: 1;
    display: flex;
    align-items: flex-end;
    padding: 0 8px;
}

.slot.hover {
    background: #cccccc;
}

.bar {
    width: 100%;
    border-radius: 8px 8px 0 0;
    background: #00c2aa;
}

.ticks {
    position: absolute;
    top: -12px;
    left: -10px;
    color: #858789;
    font-size: 15px;
    line-height: 24px;
}

.ticks span {
    display: block;
    padding-bottom: 56px;
}

.tooltip {
    position: absolute;
    top: 51px;
    right: 141px;
    padding: 11px 12px 15px;
    border: 1px solid #1d2025;
    border-radius: 15px;
    background: #0b0f14;
    box-shadow: 0 8px 20px rgba(0, 0, 0, .3);
    font-size: 22px;
    line-height: 34px;
    white-space: nowrap;
}

.tooltip-value {
    color: #00b8a2;
}

.activity {
    display: flex;
    gap: 20px;
    min-height: 112px;
}

.panel h2 + .activity {
    margin-top: 23px;
}

.rail {
    display: flex;
    flex-direction: column;
    align-items: center;
    gap: 10px;
}

.rail::after {
    content: "";
    width: 2px;
    height: 40px;
    background: #1d2025;
}

.activity-icon {
    width: 50px;
    height: 50px;
    display: flex;
    align-items: center;
    justify-content: center;
    border-radius: 20px;
}

.activity h4 {
    font-size: 19px;
    font-weight: 600;
    line-height: 24px;
}

.activity p {
    color: #8a8a8a;
    font-size: 16px;
    line-height: 25px;
}

/* taskbar */
.taskbar {
    flex: none;
    height: 50px;
    display: flex;
    align-items: center;
    background: linear-gradient(90deg, #1a1a1a 28%, #353130 34%, #353130 65%, #1c1c1c 78%);
    color: #fff;
    font-size: 15px;
}

.start {
    width: 60px;
}

.start svg {
    width: 20px;
    height: 20px;
}

.search {
    width: 360px;
    height: 50px;
    display: flex;
    align-items: center;
    gap: 13px;
    padding: 0 12px 0 15px;
    border: 1px solid #bbb;
    background: #f2f2f2;
}

.search > svg:first-child {
    width: 21px;
    height: 22px;
}

.search input {
    flex: 1;
    min-width: 0;
    padding: 0;
    border: 0;
    background: none;
    font-size: 18px;
}

.search input::placeholder {
    color: #333;
}

.search .sparkles {
    width: 78px;
    height: 32px;
}

.task-view {
    width: 64px;
}

.task-view svg {
    width: 22px;
    height: 20px;
}

.tasks {
    display: flex;
    gap: 11px;
}

.task {
    width: 51px;
    height: 50px;
    display: flex;
    align-items: center;
    justify-content: center;
    padding: 0;
    border: 0;
    border-bottom: 3px solid transparent;
    border-top: 3px solid transparent;
    background: none;
}

.task.open {
    border-bottom-color: #76b9ed;
}

.task.current {
    width: 61px;
    margin-right: -5px;
    border-top-color: #4c4e4e;
    background: #4c4e4e;
}

.task svg {
    width: 29px;
    height: 29px;
}

.weather {
    margin-left: auto;
    gap: 12px;
    font-size: 18px;
    white-space: nowrap;
}

.weather svg {
    width: 24px;
    height: 28px;
}

.tray {
    display: flex;
    align-items: center;
    gap: 9px;
    margin-left: 30px;
    font-size: 14px;
}

.tray svg {
    width: 20px;
    height: 20px;
    fill: none;
    stroke: #fff;
    stroke-width: 1.200;
}

.tray svg:first-child {
    margin-right: 4px;
}

.clock {
    margin-left: 15px;
    font-size: 14px;
    line-height: 23px;
    text-align: center;
    white-space: nowrap;
}

.notice {
    width: 70px;
    height: 50px;
    margin-right: 6px;
    border-right: 1px solid #888;
}

.notice svg {
    width: 22px;
    height: 22px;
}

.watermark {
    position: absolute;
    left: 44%;
    bottom: 20px;
    width: 230px;
    color: rgba(170, 170, 170, .5);
    text-align: center;
    pointer-events: none;
}

.watermark span {
    display: block;
    font-size: 70px;
    font-weight: 700;
    line-height: 80px;
}

.watermark .domain {
    font-family: "Liberation Sans", sans-serif;
    font-size: 37px;
    line-height: 44px;
}
```
